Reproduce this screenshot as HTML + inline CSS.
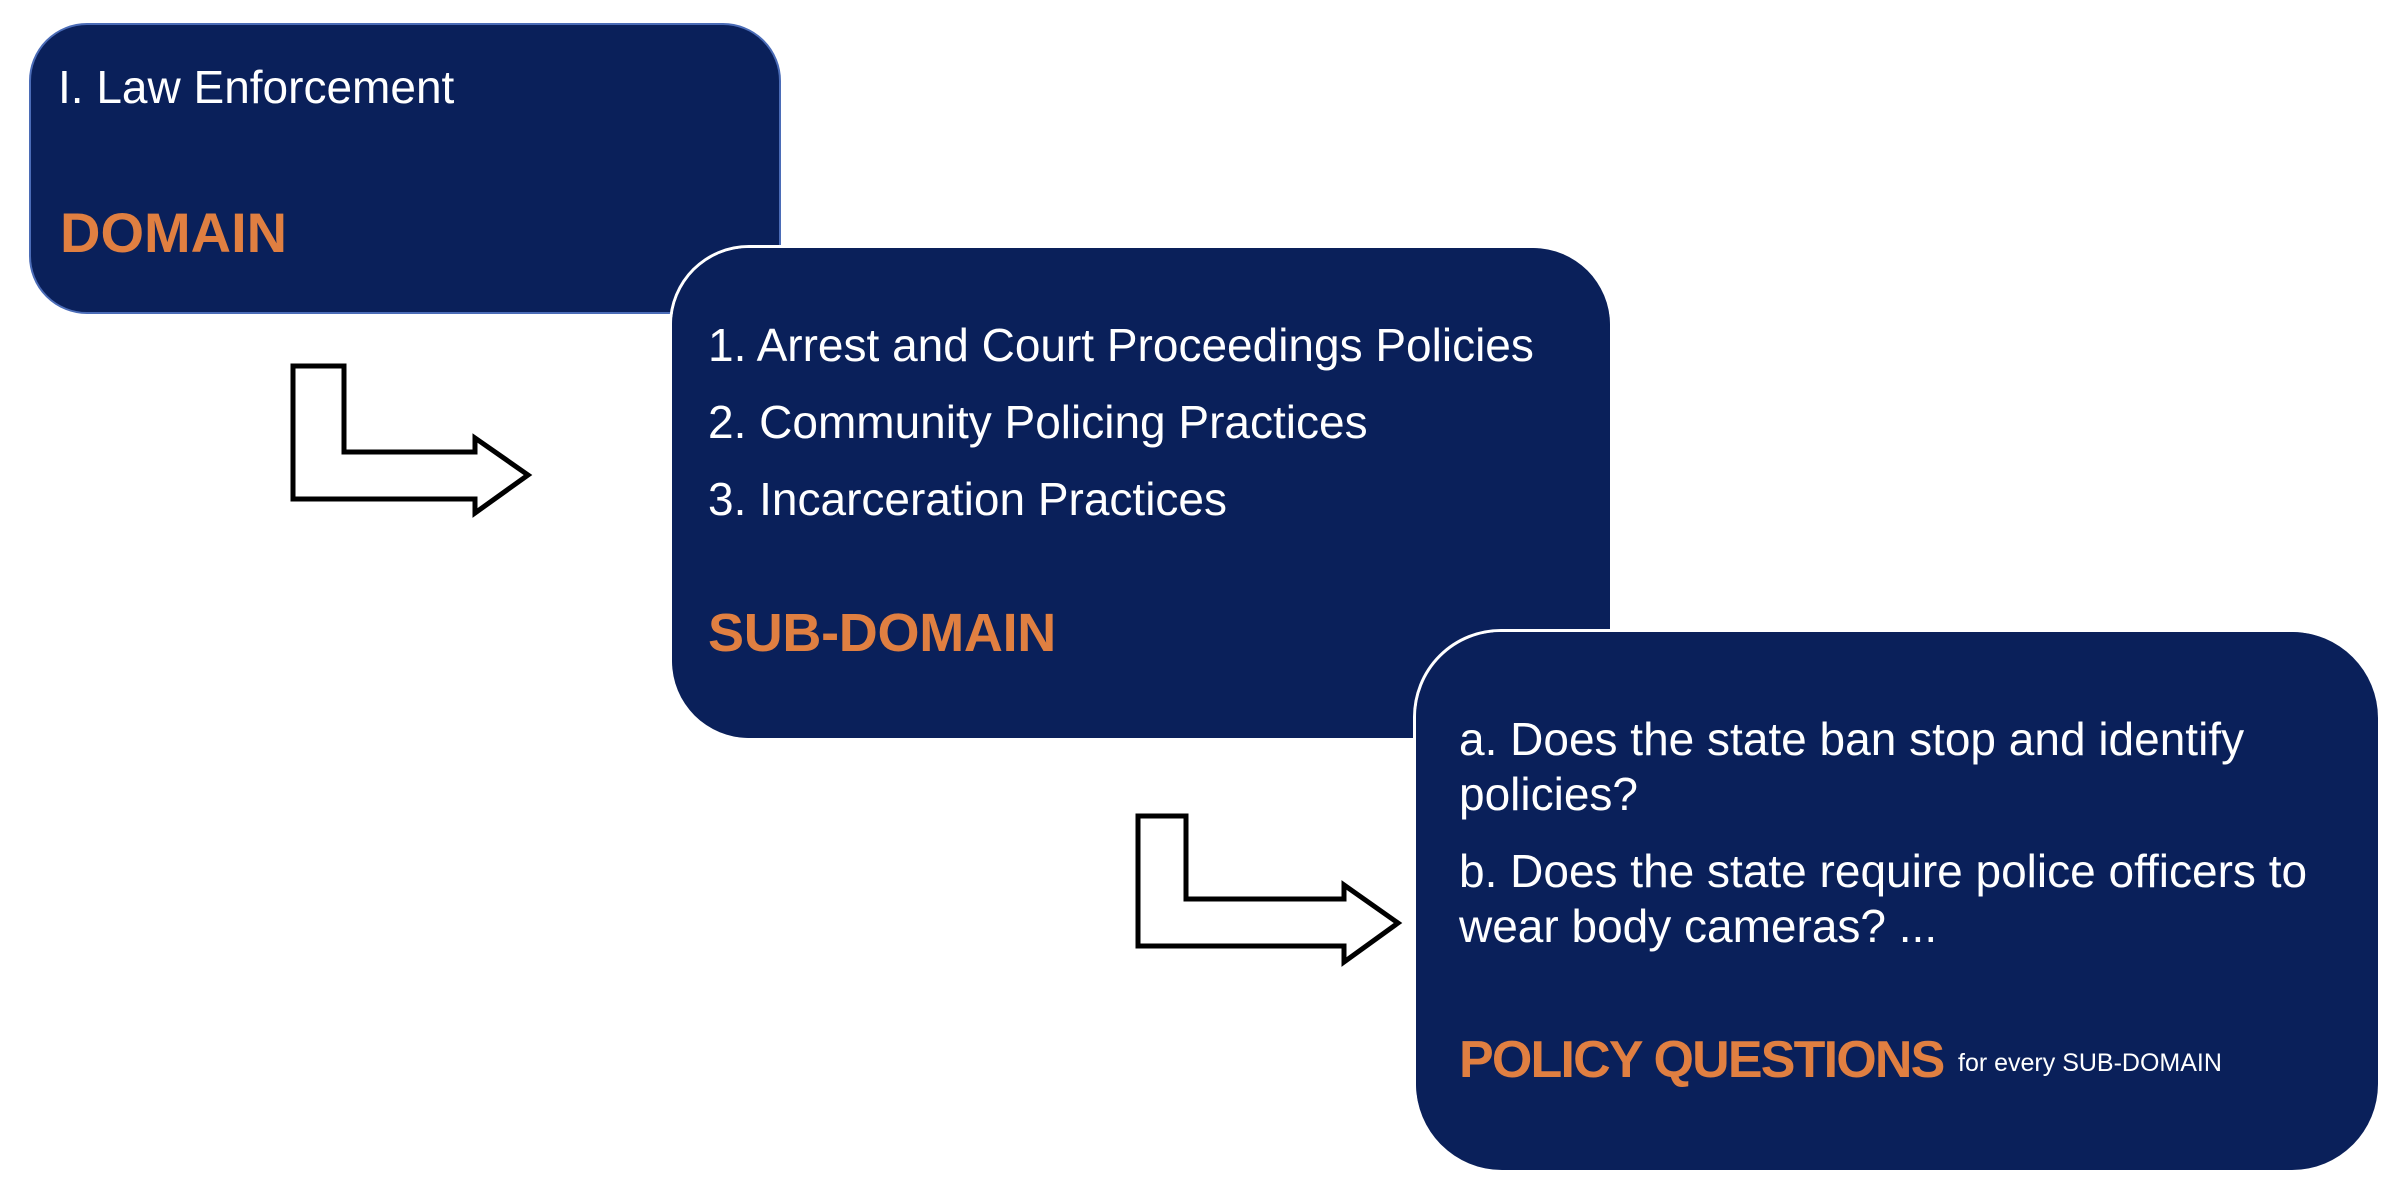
<!DOCTYPE html>
<html><head><meta charset="utf-8"><style>
html,body{margin:0;padding:0;width:2406px;height:1202px;background:#fff;overflow:hidden;font-family:"Liberation Sans",sans-serif}
.box{position:absolute;background:#0a205a;box-sizing:border-box}
.t{position:absolute;color:#fff;white-space:nowrap;font-size:46px;line-height:1}
.o{position:absolute;color:#e07f41;font-weight:bold;white-space:nowrap;line-height:1}
</style></head><body>
<div class="box" style="left:29px;top:23px;width:752px;height:291px;border-radius:58px;border:2px solid #4b6cb7"></div>
<div class="t" style="left:58px;top:64px;font-size:46px">I. Law Enforcement</div>
<div class="o" style="left:60px;top:205px;font-size:56px">DOMAIN</div>

<div class="box" style="left:669px;top:245px;width:941px;height:493px;border-radius:80px;border:3px solid #fff;border-right:none;border-bottom:none"></div>
<div class="box" style="left:672px;top:248px;width:938px;height:490px;border-radius:77px"></div>
<div class="t" style="left:708px;top:322px">1. Arrest and Court Proceedings Policies</div>
<div class="t" style="left:708px;top:399px">2. Community Policing Practices</div>
<div class="t" style="left:708px;top:476px">3. Incarceration Practices</div>
<div class="o" style="left:708px;top:606px;font-size:54px;letter-spacing:-0.3px">SUB-DOMAIN</div>

<div class="box" style="left:1413px;top:629px;width:966px;height:542px;border-radius:88px;border:3px solid #fff"></div>
<div class="box" style="left:1416px;top:632px;width:962px;height:538px;border-radius:86px"></div>
<div class="t" style="left:1459px;top:716px">a. Does the state ban stop and identify</div>
<div class="t" style="left:1459px;top:771px">policies?</div>
<div class="t" style="left:1459px;top:848px">b. Does the state require police officers to</div>
<div class="t" style="left:1459px;top:903px">wear body cameras? ...</div>
<div class="o" style="left:1459px;top:1034px;font-size:52px;letter-spacing:-1.8px">POLICY QUESTIONS</div>
<div class="t" style="left:1958px;top:1051px;font-size:25px">for every SUB-DOMAIN</div>

<svg style="position:absolute;left:0;top:0" width="2406" height="1202">
<path d="M293 366 H344 V452 H475 V438 L528 475 L475 513 V499 H293 Z" fill="#fff" stroke="#000" stroke-width="5"/>
<path d="M1138 816 H1186 V899 H1344 V885 L1398 923 L1344 962 V946 H1138 Z" fill="#fff" stroke="#000" stroke-width="5"/>
</svg>
</body></html>
